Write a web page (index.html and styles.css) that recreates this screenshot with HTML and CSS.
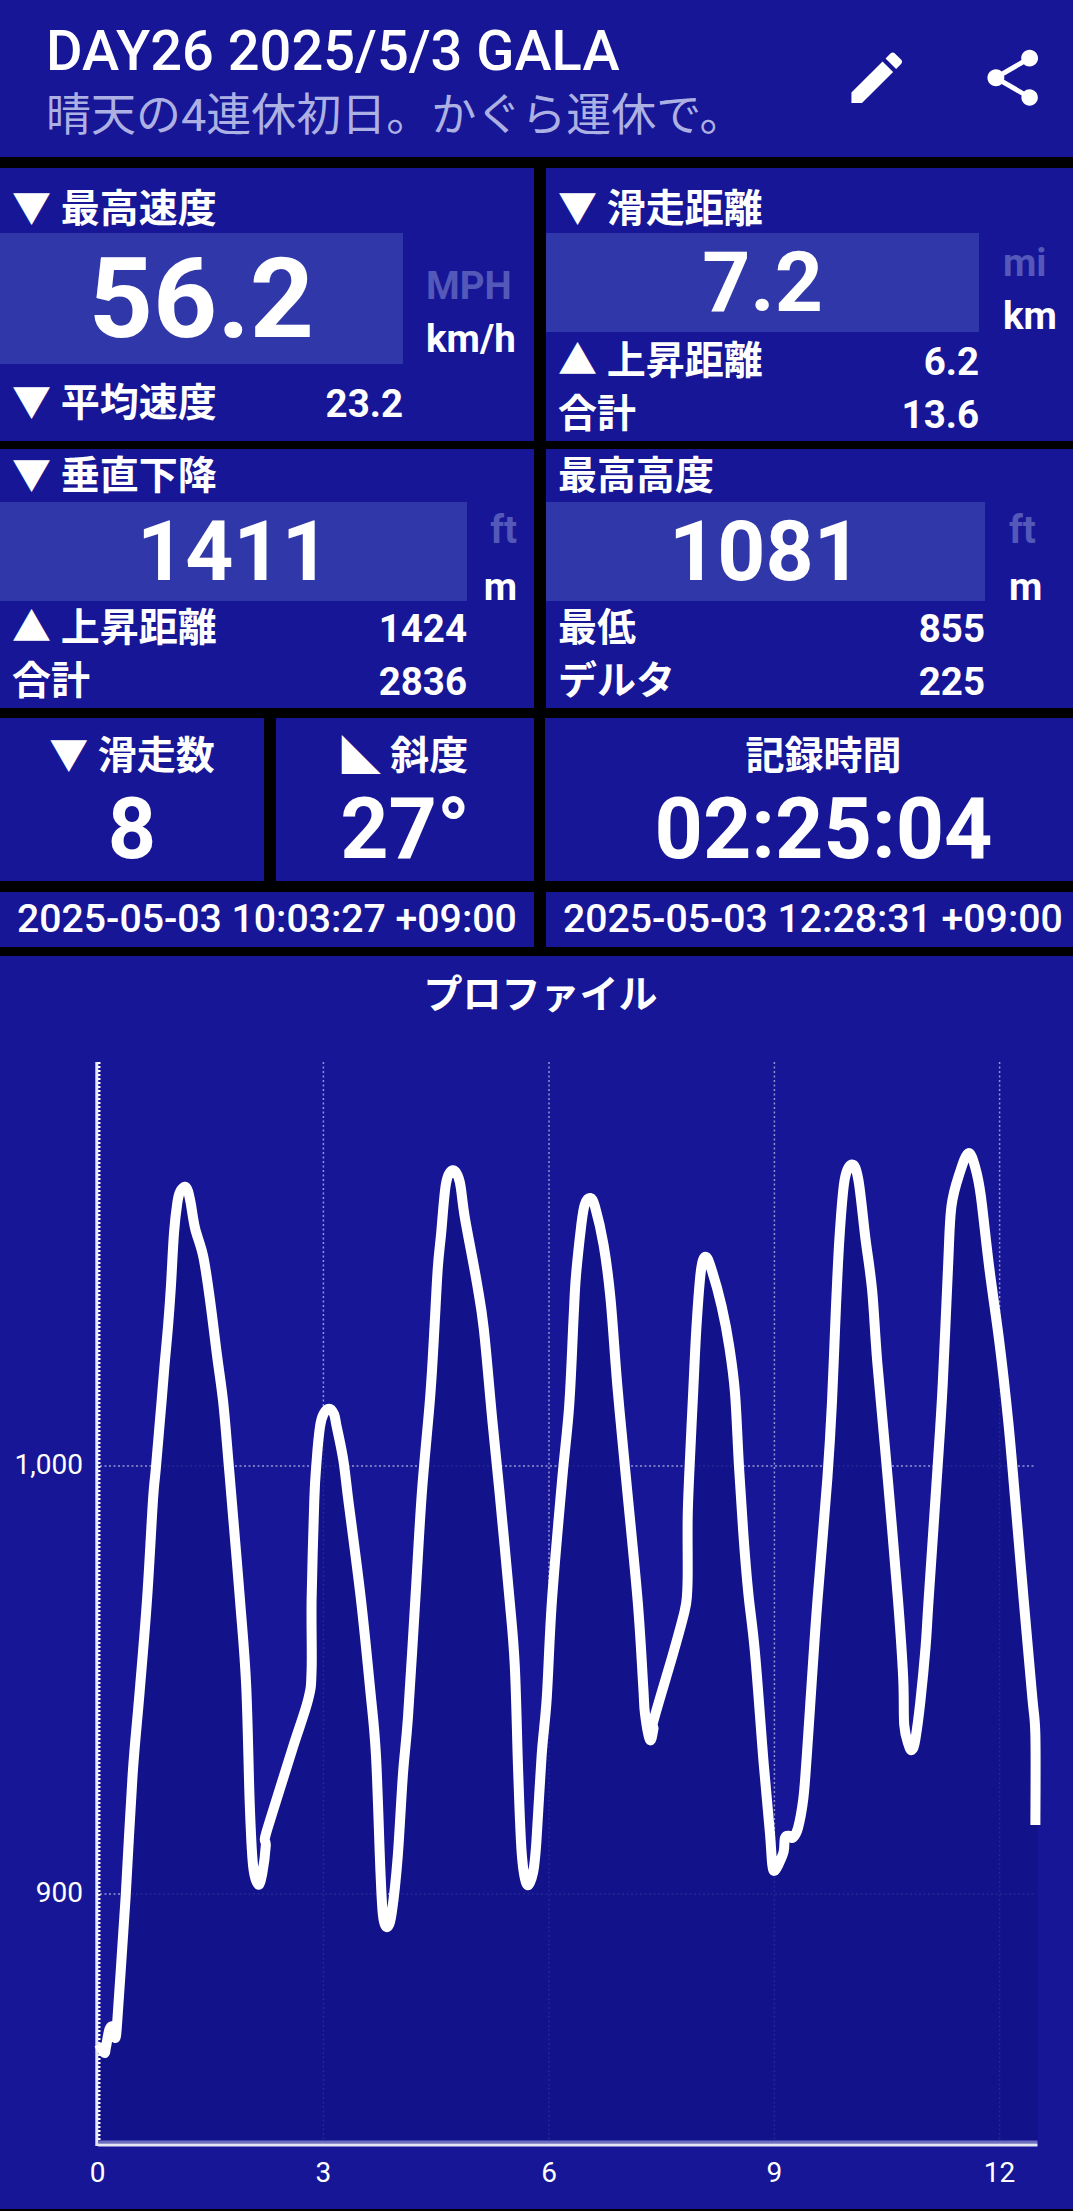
FILE: index.html
```html
<!DOCTYPE html>
<html lang="ja">

<head>
    <meta charset="UTF-8">
    <meta name="viewport" content="width=device-width, initial-scale=1.0">
    <title>DAY26 2025/5/3 GALA</title>
    <link rel="stylesheet" href="styles.css">
</head>

<body>
    <div class="page">
        <header class="app-bar">
            <div class="app-title">
                <h1>DAY26 2025/5/3 GALA</h1>
                <p>晴天の4連休初日。かぐら運休で。</p>
            </div>
            <svg class="app-icon icon-edit" viewBox="0 0 24 24">
                <path d="M3 17.25V21h3.75L17.81 9.94l-3.75-3.75L3 17.25zM20.71 7.04c.39-.39.39-1.02 0-1.41l-2.34-2.34c-.39-.39-1.02-.39-1.41 0l-1.83 1.83 3.75 3.75 1.83-1.83z"/>
            </svg>
            <svg class="app-icon" viewBox="0 0 24 24">
                <path d="M18 16.08c-.76 0-1.44.3-1.96.77L8.91 12.7c.05-.23.09-.46.09-.7s-.04-.47-.09-.7l7.05-4.11c.54.5 1.25.81 2.04.81 1.66 0 3-1.34 3-3s-1.34-3-3-3-3 1.34-3 3c0 .24.04.47.09.7L8.04 9.81C7.5 9.31 6.79 9 6 9c-1.66 0-3 1.34-3 3s1.34 3 3 3c.79 0 1.5-.31 2.04-.81l7.12 4.16c-.05.21-.08.43-.08.65 0 1.61 1.31 2.92 2.92 2.92 1.61 0 2.92-1.31 2.92-2.92s-1.31-2.92-2.92-2.92z"/>
            </svg>
        </header>

        <section class="row row-speed">
            <div class="tile">
                <div class="label label-tall">▼ 最高速度</div>
                <div class="reading">
                    <div class="value value-big box-speed">56.2</div>
                    <div class="units units-speed">
                        <span class="unit-off">MPH</span>
                        <span>km/h</span>
                    </div>
                </div>
                <div class="stat stat-single box-speed"><span>▼ 平均速度</span><b>23.2</b></div>
            </div>
            <div class="tile">
                <div class="label label-tall">▼ 滑走距離</div>
                <div class="reading">
                    <div class="value box-run">7.2</div>
                    <div class="units units-run">
                        <span class="unit-off">mi</span>
                        <span>km</span>
                    </div>
                </div>
                <div class="stat box-run"><span>▲ 上昇距離</span><b>6.2</b></div>
                <div class="stat box-run"><span>合計</span><b>13.6</b></div>
            </div>
        </section>

        <section class="row row-height">
            <div class="tile">
                <div class="label">▼ 垂直下降</div>
                <div class="reading">
                    <div class="value box-drop">1411</div>
                    <div class="units units-alt units-end">
                        <span class="unit-off">ft</span>
                        <span>m</span>
                    </div>
                </div>
                <div class="stat box-drop"><span>▲ 上昇距離</span><b>1424</b></div>
                <div class="stat box-drop"><span>合計</span><b>2836</b></div>
            </div>
            <div class="tile">
                <div class="label">最高高度</div>
                <div class="reading">
                    <div class="value box-top">1081</div>
                    <div class="units units-alt">
                        <span class="unit-off">ft</span>
                        <span>m</span>
                    </div>
                </div>
                <div class="stat box-top"><span>最低</span><b>855</b></div>
                <div class="stat box-top"><span>デルタ</span><b>225</b></div>
            </div>
        </section>

        <section class="row-summary">
            <div class="tile summary">
                <div class="summary-label">▼ 滑走数</div>
                <div class="summary-value">8</div>
            </div>
            <div class="tile summary">
                <div class="summary-label">◣ 斜度</div>
                <div class="summary-value">27°</div>
            </div>
            <div class="tile summary summary-time">
                <div class="summary-label">記録時間</div>
                <div class="summary-value">02:25:04</div>
            </div>
        </section>

        <section class="row row-dates">
            <div class="tile date">2025-05-03 10:03:27 +09:00</div>
            <div class="tile date">2025-05-03 12:28:31 +09:00</div>
        </section>

        <section class="tile profile">
            <h2>プロファイル</h2>
            <svg class="chart" viewBox="0 1032 1073 1177">
                <!-- grid -->
                <g class="grid">
                    <line x1="323.4" y1="1062" x2="323.4" y2="2144"/>
                    <line x1="549" y1="1062" x2="549" y2="2144"/>
                    <line x1="774.4" y1="1062" x2="774.4" y2="2144"/>
                    <line x1="999.6" y1="1062" x2="999.6" y2="2144"/>
                    <line x1="100" y1="1466" x2="1036" y2="1466"/>
                    <line x1="100" y1="1894" x2="1036" y2="1894"/>
                </g>

                <path id="area" class="area"/>

                <!-- axes -->
                <line class="axis" x1="96.8" y1="1062" x2="96.8" y2="2146"/>
                <line class="axis-dots" x1="99.2" y1="1062" x2="99.2" y2="2140"/>
                <line class="axis-soft" x1="98" y1="2142" x2="1037.5" y2="2142"/>
                <line class="axis" x1="98" y1="2145" x2="1037.5" y2="2145"/>

                <path id="line" class="line"/>

                <!-- axis labels -->
                <text class="tick tick-y" x="83" y="1474">1,000</text>
                <text class="tick tick-y" x="83" y="1902">900</text>
                <text class="tick" x="97.6" y="2182">0</text>
                <text class="tick" x="323.4" y="2182">3</text>
                <text class="tick" x="549" y="2182">6</text>
                <text class="tick" x="774.4" y="2182">9</text>
                <text class="tick" x="999.6" y="2182">12</text>
            </svg>
        </section>
    </div>

    <script src="chart.js"></script>
</body>

</html>
```

FILE: styles.css
```css
html,
body {
    margin: 0;
    padding: 0;
    background-color: #000;
}

body {
    font-family: Roboto, "Noto Sans CJK JP", sans-serif;
    color: #fff;
}

.page {
    width: 1073px;
    height: 2211px;
    display: flex;
    flex-direction: column;
    gap: 11px;
}

.tile {
    background-color: #161696;
}

/* app bar */
.app-bar {
    height: 157px;
    flex-shrink: 0;
    display: flex;
    align-items: flex-start;
    background-color: #161696;
}

.app-title {
    flex: 1;
    padding: 20px 0 0 46px;
}

.app-title h1 {
    margin: 0;
    font-size: 56px;
    line-height: 62px;
    font-weight: 500;
}

.app-title p {
    margin: 4px 0 0;
    font-size: 45px;
    line-height: 60px;
    color: #adb0e2;
}

.app-icon {
    width: 67.5px;
    height: 67.5px;
    margin: 43.5px 27px 0 0;
    fill: #fff;
}

.icon-edit {
    margin-right: 68.5px;
}

/* rows */
.row {
    display: grid;
    grid-template-columns: 534px 527px;
    gap: 12px;
    flex-shrink: 0;
}

.row-speed {
    height: 270px;
}

.row-height {
    height: 258px;
}

.row-dates {
    height: 53px;
}

/* tile contents */
.label {
    height: 53px;
    padding-left: 12px;
    font-size: 39px;
    line-height: 55px;
    font-weight: 700;
}

.label-tall {
    height: 51px;
    padding-top: 14px;
}

.reading {
    display: flex;
}

.value {
    height: 99px;
    flex-shrink: 0;
    text-align: center;
    font-size: 84px;
    line-height: 99px;
    font-weight: 700;
    background-color: #3037a8;
}

.value-big {
    height: 131px;
    font-size: 112px;
    line-height: 131px;
}

.box-speed {
    width: 403px;
}

.box-run {
    width: 433px;
}

.box-drop {
    width: 467px;
}

.box-top {
    width: 439px;
}

.units {
    height: 99px;
    display: flex;
    flex-direction: column;
    font-size: 38.5px;
    line-height: 53px;
    font-weight: 700;
}

.units-speed {
    padding: 26px 0 0 23px;
}

.units-run {
    padding: 3px 0 0 24px;
}

.units-alt {
    padding: 1px 0 0 24px;
    gap: 4px;
}

.units-end {
    width: 50px;
    padding-left: 0;
    align-items: flex-end;
}

.unit-off {
    color: #5459b9;
}

.stat {
    height: 53px;
    box-sizing: border-box;
    padding-left: 12px;
    display: flex;
    justify-content: space-between;
    font-size: 39px;
    line-height: 53px;
    font-weight: 700;
}

.stat b {
    font-weight: 700;
    font-size: 38.5px;
}

.stat-single {
    height: 74px;
    padding-top: 13px;
}

/* summary row */
.row-summary {
    height: 163px;
    flex-shrink: 0;
    display: grid;
    grid-template-columns: 264px 258px 528px;
    column-gap: 12px;
}

.row-summary .summary-time {
    margin-left: -1px;
    padding-left: 28px;
}

.summary {
    text-align: center;
}

.summary-label {
    padding-top: 10px;
    font-size: 39px;
    line-height: 56px;
    font-weight: 700;
}

.summary-value {
    font-size: 84.4px;
    line-height: 92px;
    font-weight: 700;
}

/* date row */
.date {
    padding-left: 17px;
    font-size: 39.2px;
    line-height: 55px;
    font-weight: 500;
}

/* profile chart */
.profile {
    height: 1253px;
    flex-shrink: 0;
}

.profile h2 {
    margin: 0;
    height: 76px;
    padding-left: 8px;
    text-align: center;
    font-size: 39px;
    line-height: 78px;
    font-weight: 700;
}

.chart {
    display: block;
    width: 1073px;
    height: 1177px;
}

.grid line {
    stroke: rgba(255, 255, 255, 0.55);
    stroke-width: 1.5;
    stroke-dasharray: 2 2.5;
}

.area {
    fill: #121288;
    fill-opacity: 0.85;
}

.axis {
    stroke: #e6e6f5;
    stroke-width: 3;
}

.axis-dots {
    stroke: #fff;
    stroke-width: 2.6;
    stroke-dasharray: 2 2;
}

.axis-soft {
    stroke: #6a6dc0;
    stroke-width: 3;
}

.line {
    fill: none;
    stroke: #fff;
    stroke-width: 10;
    stroke-linejoin: round;
}

.tick {
    fill: #fff;
    font-family: Roboto, sans-serif;
    font-size: 28px;
    text-anchor: middle;
}

.tick-y {
    text-anchor: end;
}
```

FILE: chart.js
```js
// altitude samples, in chart pixels
const points = [
    [98.8, 2044], [104.3, 2053], [106, 2047], [109.5, 2029], [114, 2027], [115.4, 2038], [117, 2025],
    [120.5, 1974], [125.7, 1896], [132.6, 1775], [139.5, 1693.5], [147, 1600], [153, 1500], [156, 1466.7],
    [161.7, 1400], [165, 1360], [168, 1326.7], [170.9, 1286.7], [174, 1233], [177.3, 1203], [180, 1192],
    [185, 1186.7], [188, 1191], [190.7, 1203], [195, 1228], [203.3, 1256.7], [210, 1300], [216.7, 1353],
    [223.3, 1403], [228.3, 1460], [231.7, 1500],
    [240, 1600], [246.2, 1685.7], [249.7, 1802.6], [253, 1865], [258.3, 1884.5], [262.4, 1872.8],
    [265.8, 1845.5], [265, 1837.7], [272, 1814], [292.7, 1748], [308.2, 1699.4], [311.6, 1670], [311.6, 1600],
    [314.3, 1500], [316.7, 1460], [320, 1426.7], [323.5, 1414], [329, 1408.7], [334, 1414], [336.7, 1426.7],
    [343.3, 1460], [348.3, 1500],
    [361, 1600], [370.2, 1689.6], [376, 1755.9], [380.5, 1872.8], [383, 1915.7],
    [387.4, 1927], [391.9, 1911.8], [397.7, 1857], [402.9, 1775], [408, 1717], [415.3, 1600], [421.8, 1493.7],
    [430.4, 1394], [434.6, 1325], [437.8, 1268], [441, 1235], [446, 1183.7], [452.8, 1170.3],
    [459.7, 1181.8], [464.9, 1218], [476.9, 1283], [483.8, 1329], [492.4, 1421], [499.3, 1490], [509.6, 1600],
    [514.8, 1666], [518.3, 1775], [521.7, 1853], [526.9, 1884.5], [533, 1872.8], [536.4, 1841.6],
    [541.6, 1756], [546.8, 1697.4], [552, 1600], [562.3, 1478], [569.2, 1405.7], [573.6, 1317.6],
    [576, 1275.5], [581.2, 1225.8], [584.7, 1204.7], [590.2, 1198], [595, 1206.7], [603.6, 1245],
    [610.5, 1298.5], [617.4, 1386.5], [626, 1478], [637.6, 1600], [643.2, 1685.7], [644.9, 1713], [650, 1740],
    [653.5, 1728.6], [653.5, 1720.8], [673.3, 1653], [684.5, 1611.7], [687, 1595], [687.7, 1573], [687.7, 1516.7],
    [689.3, 1473], [693.3, 1390], [696.7, 1323], [701, 1270], [705.7, 1256.7], [711.7, 1270],
    [721.7, 1306.7], [729.3, 1346.7], [735, 1393], [739, 1466.7], [743.3, 1533], [748.3, 1593],
    [755, 1653], [763.7, 1763.7], [770, 1833.8], [772.3, 1865],
    [774.7, 1870.8], [779.2, 1863], [783.7, 1851.4], [785, 1837.7], [789.5, 1835.8], [793, 1837.7],
    [798, 1828], [803.3, 1798.8], [806.8, 1755.9], [812, 1678], [817.5, 1600], [827.4, 1478], [832, 1401.8],
    [836, 1306], [839.5, 1237.3], [844.6, 1180], [852.2, 1164.6], [858.4, 1180], [865.3, 1237.3],
    [872.2, 1290.9], [877.4, 1363.6], [887.7, 1478], [898, 1600], [903.2, 1678], [904.2, 1724.7],
    [908.3, 1744], [911.8, 1750], [915.2, 1740.3], [920.4, 1701.3], [925.6, 1646.8], [928.6, 1600],
    [937.6, 1466.9], [942.8, 1382.7], [948, 1267.9], [951.4, 1206.7], [960, 1172], [968.6, 1153],
    [975.5, 1168.4], [980.7, 1195], [989.3, 1268], [999.6, 1344], [1008.2, 1421], [1015, 1497.5],
    [1023.7, 1600], [1032.3, 1697.4], [1035.4, 1736], [1035.4, 1824.9]
];

// catmull-rom through the samples, as cubic beziers
function smoothPath(pts) {
    let d = `M${pts[0][0]} ${pts[0][1]}`;
    for (let i = 0; i < pts.length - 1; i++) {
        const p0 = pts[i - 1] || pts[i];
        const p1 = pts[i];
        const p2 = pts[i + 1];
        const p3 = pts[i + 2] || p2;
        const c1x = p1[0] + (p2[0] - p0[0]) / 6;
        const c1y = p1[1] + (p2[1] - p0[1]) / 6;
        const c2x = p2[0] - (p3[0] - p1[0]) / 6;
        const c2y = p2[1] - (p3[1] - p1[1]) / 6;
        d += `C${c1x.toFixed(1)} ${c1y.toFixed(1)} ${c2x.toFixed(1)} ${c2y.toFixed(1)} ${p2[0]} ${p2[1]}`;
    }
    return d;
}

const linePath = smoothPath(points);
document.getElementById('line').setAttribute('d', linePath);
document.getElementById('area').setAttribute('d', `${linePath}L1037.5 1824.9L1037.5 2144L98 2144L98 2044Z`);
```
